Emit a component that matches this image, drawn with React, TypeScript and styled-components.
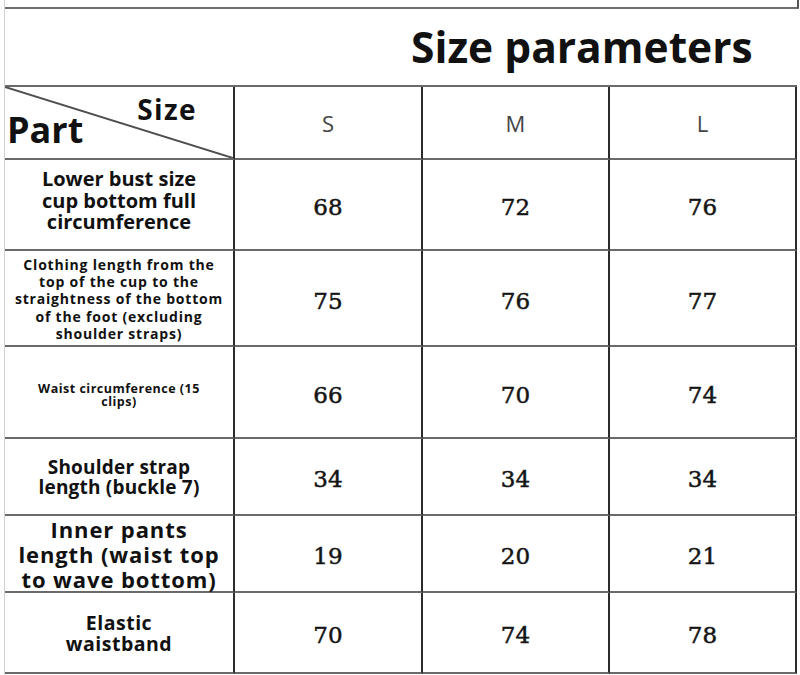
import { Fragment } from "react";
import styled, { createGlobalStyle } from "styled-components";

const GlobalStyle = createGlobalStyle`
  html, body {
    margin: 0;
    padding: 0;
    background: #ffffff;
  }
  body {
    font-family: "Open Sans", "Liberation Sans", sans-serif;
    color: #111;
  }
`;

const Page = styled.div`
  position: relative;
  width: 795px;
  height: 675px;
  margin-left: 4px;
  padding-top: 7px;
  box-sizing: border-box;
  border-left: 1px solid #d2d2d2;
  overflow: hidden;
  &::after {
    content: "";
    position: absolute;
    top: 0;
    right: 0;
    width: 2px;
    height: 8px;
    background: #555;
  }
`;

const Sheet = styled.div`
  display: grid;
  grid-template-columns: 230px 188px 187px 187px;
  grid-template-rows: 78px 73px 91px 96px 92px 77px 77px 81px;
  border-top: 2px solid #6e6e6e;
`;

const Cell = styled.div`
  box-sizing: border-box;
  border-bottom: 2px solid #6a6a6a;
  border-right: 2px solid #2b2b2b;
  display: flex;
  align-items: center;
  justify-content: center;
  text-align: center;
  min-width: 0;
`;

const TitleCell = styled(Cell)`
  grid-column: 1 / span 4;
  justify-content: flex-start;
  padding-left: 406px;
  border-right: none;
`;

const Title = styled.h1`
  margin: 0;
  font-family: "Open Sans", "Liberation Sans", sans-serif;
  font-weight: 700;
  font-size: 42.5px;
  line-height: 1;
  color: #111;
  white-space: nowrap;
`;

const CornerCell = styled(Cell)`
  position: relative;
  display: grid;
  grid-template-columns: 1fr;
  grid-template-rows: 1fr;
  justify-content: stretch;
  align-content: stretch;
  padding: 8px 36px 10px 2px;
`;

const Diagonal = styled.svg`
  position: absolute;
  inset: 0;
  width: 100%;
  height: 100%;
  pointer-events: none;
`;

const CornerText = styled.span<{ $top?: boolean }>`
  grid-column: 1;
  grid-row: 1;
  font-weight: 700;
  line-height: 1;
  white-space: nowrap;
  color: #111;
  font-size: ${p => (p.$top ? "28px" : "36px")};
  letter-spacing: ${p => (p.$top ? "1.4px" : "0")};
  align-self: ${p => (p.$top ? "start" : "end")};
  justify-self: ${p => (p.$top ? "end" : "start")};
`;

const SizeHead = styled(Cell)`
  font-size: 22px;
  font-weight: 400;
  color: #444;
`;

const LabelCell = styled(Cell)<{ $shift: number; $teal?: boolean }>`
  padding: ${p =>
    p.$shift >= 0 ? `${p.$shift * 2}px 4px 0` : `0 4px ${-p.$shift * 2}px`};
  ${p =>
    p.$teal
      ? `box-shadow: -3px 0 0 #9edfd2; border-left: 1px solid #5f9c92; margin-left: -1px;`
      : ""}
`;

const Label = styled.div<{ $size: number; $lh: number; $ls: number }>`
  font-weight: 700;
  color: #111;
  font-size: ${p => p.$size}px;
  line-height: ${p => p.$lh}px;
  letter-spacing: ${p => p.$ls}px;
  white-space: nowrap;
`;

const ValueCell = styled(Cell)`
  padding-top: 5px;
  font-family: "DejaVu Serif", "Liberation Serif", serif;
  font-size: 23px;
  color: #151515;
  -webkit-text-stroke: 0.5px #151515;
`;

interface Row {
  lines: string[];
  size: number;
  lh: number;
  ls: number;
  shift: number;
  teal?: boolean;
  values: number[];
}

const rows: Row[] = [
  {
    lines: ["Lower bust size", "cup bottom full", "circumference"],
    size: 20, lh: 21.5, ls: 0, shift: -4,
    values: [68, 72, 76],
  },
  {
    lines: [
      "Clothing length from the",
      "top of the cup to the",
      "straightness of the bottom",
      "of the foot (excluding",
      "shoulder straps)",
    ],
    size: 14, lh: 17.3, ls: 0.8, shift: 1, teal: true,
    values: [75, 76, 77],
  },
  {
    lines: ["Waist circumference (15", "clips)"],
    size: 12.5, lh: 13.5, ls: 0.5, shift: 3,
    values: [66, 70, 74],
  },
  {
    lines: ["Shoulder strap", "length (buckle 7)"],
    size: 19, lh: 20, ls: 0.2, shift: 0.5,
    values: [34, 34, 34],
  },
  {
    lines: ["Inner pants", "length (waist top", "to wave bottom)"],
    size: 22, lh: 25, ls: 0.9, shift: 1,
    values: [19, 20, 21],
  },
  {
    lines: ["Elastic", "waistband"],
    size: 19.5, lh: 20.5, ls: 0.5, shift: 1,
    values: [70, 74, 78],
  },
];

export default function App() {
  return (
    <>
      <GlobalStyle />
      <Page>
        <Sheet>
          <TitleCell>
            <Title>Size parameters</Title>
          </TitleCell>

          <CornerCell>
            <Diagonal viewBox="0 0 100 100" preserveAspectRatio="none">
              <line
                x1="0" y1="0" x2="100" y2="100"
                stroke="#4f4f4f" strokeWidth="2"
                vectorEffect="non-scaling-stroke"
              />
            </Diagonal>
            <CornerText $top>Size</CornerText>
            <CornerText>Part</CornerText>
          </CornerCell>
          <SizeHead>S</SizeHead>
          <SizeHead>M</SizeHead>
          <SizeHead>L</SizeHead>

          {rows.map((row, i) => (
            <Fragment key={i}>
              <LabelCell $shift={row.shift} $teal={row.teal}>
                <Label $size={row.size} $lh={row.lh} $ls={row.ls}>
                  {row.lines.map((line, j) => (
                    <div key={j}>{line}</div>
                  ))}
                </Label>
              </LabelCell>
              {row.values.map((v, j) => (
                <ValueCell key={j}>{v}</ValueCell>
              ))}
            </Fragment>
          ))}
        </Sheet>
      </Page>
    </>
  );
}
